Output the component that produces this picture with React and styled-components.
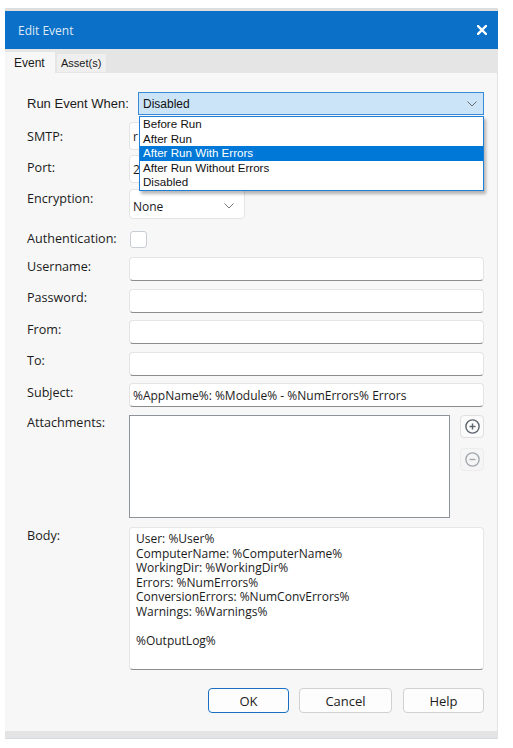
import React from "react";
import styled, { createGlobalStyle } from "styled-components";

const GlobalStyle = createGlobalStyle`
  body {
    margin: 0;
    background: #ffffff;
    font-family: "Open Sans", "Liberation Sans", sans-serif;
  }
`;

const Dialog = styled.div`
  width: 493px;
  margin: 8px 0 0 5px;
  border-top: 3px solid #dedede;
`;

const TitleBar = styled.div`
  height: 38px;
  background: #0b70c7;
  display: flex;
  align-items: center;
  justify-content: space-between;
  padding: 0 11px 0 13px;
`;

const Title = styled.div`
  font-family: "Open Sans", sans-serif;
  font-size: 12px;
  color: #dfe9f6;
`;

const TabStrip = styled.div`
  height: 24px;
  background: #e5e5e5;
  display: flex;
  align-items: flex-end;
  gap: 2px;
`;

const Tab = styled.div`
  height: ${(p) => (p.$active ? "21px" : "18px")};
  margin-bottom: ${(p) => (p.$active ? "0" : "1px")};
  padding: ${(p) => (p.$active ? "0 0 0 9px" : "0 0 0 4px")};
  background: ${(p) => (p.$active ? "#f7f7f7" : "#efefef")};
  font-family: "Liberation Sans", Arial, sans-serif;
  font-size: ${(p) => (p.$active ? "12px" : "11px")};
  color: #1a1a1a;
  display: flex;
  align-items: center;
  width: ${(p) => (p.$active ? "50px" : "49px")};
  box-sizing: border-box;
`;

const Body = styled.div`
  background: #f7f7f7;
  border-right: 1px solid #e2e2e2;
  padding: 19px 13px 18px 22px;
  display: flex;
  flex-direction: column;
`;

const Row = styled.div`
  display: grid;
  grid-template-columns: 102px 1fr;
  align-items: ${(p) => p.$align || "start"};
  margin-top: ${(p) => p.$top || 0}px;
`;

const Label = styled.div`
  font-family: ${(p) =>
    p.$classic ? '"Liberation Sans", Arial, sans-serif' : '"Open Sans", sans-serif'};
  font-size: ${(p) => (p.$classic ? "13px" : "12.6px")};
  line-height: 16px;
  color: #1b1b1b;
  white-space: nowrap;
  margin-top: ${(p) => p.$offset || 0}px;
`;

const ComboWrap = styled.div`
  position: relative;
  margin-left: 9px;
`;

const Combo = styled.div`
  height: 23px;
  box-sizing: border-box;
  background: #cce4f7;
  border: 1px solid #3b8ad6;
  display: flex;
  align-items: center;
  justify-content: space-between;
  padding: 0 6px 0 4px;
  font-family: "Liberation Sans", Arial, sans-serif;
  font-size: 12px;
  color: #111;
`;

const DropList = styled.div`
  position: absolute;
  top: 24px;
  left: 1px;
  right: 0;
  z-index: 5;
  background: #ffffff;
  border: 1px solid #1e7fd8;
  box-shadow: 2px 3px 3px rgba(0, 0, 0, 0.28);
`;

const DropItem = styled.div`
  height: 14.6px;
  line-height: 14.6px;
  padding-left: 3px;
  font-family: "Liberation Sans", Arial, sans-serif;
  font-size: 11.6px;
  color: ${(p) => (p.$selected ? "#ffffff" : "#111")};
  background: ${(p) => (p.$selected ? "#0078d7" : "transparent")};
  white-space: nowrap;
`;

const TextBox = styled.div`
  height: ${(p) => p.$height || 24}px;
  box-sizing: border-box;
  background: #ffffff;
  border: 1px solid #e4e4e4;
  border-bottom-color: ${(p) => (p.$flat ? "#e4e4e4" : "#8c8c8c")};
  border-radius: 4px;
  padding: 0 3px;
  display: flex;
  align-items: center;
  font-size: 12px;
  color: #1b1b1b;
  white-space: nowrap;
  overflow: hidden;
`;

const Select = styled(TextBox)`
  width: 116px;
  height: 30px;
  justify-content: space-between;
  padding: 4px 10px 0 3px;
  border-bottom-color: #e4e4e4;
`;

const CheckBox = styled.div`
  width: 17px;
  height: 17px;
  box-sizing: border-box;
  margin-left: 1px;
  border: 1px solid #c9ced6;
  border-radius: 3px;
  background: #ffffff;
`;

const AttachArea = styled.div`
  display: flex;
  gap: 10px;
`;

const ListBox = styled.div`
  width: 321px;
  height: 103px;
  box-sizing: border-box;
  background: #ffffff;
  border: 1px solid #8e939a;
`;

const SideButtons = styled.div`
  display: flex;
  flex-direction: column;
  gap: 10px;
`;

const IconButton = styled.div`
  width: 24px;
  height: 23px;
  box-sizing: border-box;
  border: 1px solid ${(p) => (p.$disabled ? "#ececec" : "#e0e0e0")};
  border-radius: 4px;
  background: ${(p) => (p.$disabled ? "#f5f5f5" : "#fbfbfb")};
  display: flex;
  align-items: center;
  justify-content: center;
`;

const BodyText = styled.div`
  height: 143px;
  box-sizing: border-box;
  background: #ffffff;
  border: 1px solid #e6e6e6;
  border-bottom-color: #8c8c8c;
  border-radius: 4px;
  padding: 4px 6px;
  font-size: 12px;
  line-height: 14.5px;
  color: #1b1b1b;
  white-space: pre;
`;

const ButtonRow = styled.div`
  display: flex;
  justify-content: flex-end;
  margin-top: 18px;
`;

const Button = styled.div`
  width: ${(p) => p.$width}px;
  height: 25px;
  margin-left: ${(p) => p.$gap || 0}px;
  box-sizing: border-box;
  border: 1px solid ${(p) => (p.$primary ? "#1a6fc0" : "#d1d1d1")};
  border-radius: 4px;
  background: #fdfdfd;
  display: flex;
  align-items: center;
  justify-content: center;
  font-size: 13px;
  color: #1b1b1b;
`;

const BottomStrip = styled.div`
  height: 7px;
  background: #e4e4e4;
  border-bottom: 1px solid #d6dbe2;
`;

const Chevron = ({ color = "#6b6b6b" }) => (
  <svg width="10" height="6" viewBox="0 0 10 6">
    <path d="M0.5 0.5 L5 5 L9.5 0.5" fill="none" stroke={color} strokeWidth="1" />
  </svg>
);

const CloseIcon = () => (
  <svg width="10" height="10" viewBox="0 0 10 10">
    <path d="M1 1 L9 9 M9 1 L1 9" stroke="#ffffff" strokeWidth="2.4" strokeLinecap="square" />
  </svg>
);

const CircleIcon = ({ plus, color }) => (
  <svg width="15" height="15" viewBox="0 0 15 15">
    <circle cx="7.5" cy="7.5" r="6.6" fill="none" stroke={color} strokeWidth="1.4" />
    <path d="M4.5 7.5 H10.5" stroke={color} strokeWidth="1.4" />
    {plus && <path d="M7.5 4.5 V10.5" stroke={color} strokeWidth="1.4" />}
  </svg>
);

const runOptions = [
  "Before Run",
  "After Run",
  "After Run With Errors",
  "After Run Without Errors",
  "Disabled",
];

const bodyLines = `User: %User%
ComputerName: %ComputerName%
WorkingDir: %WorkingDir%
Errors: %NumErrors%
ConversionErrors: %NumConvErrors%
Warnings: %Warnings%

%OutputLog%`;

export default function App() {
  return (
    <>
      <GlobalStyle />
      <Dialog>
        <TitleBar>
          <Title>Edit Event</Title>
          <CloseIcon />
        </TitleBar>
        <TabStrip>
          <Tab $active>Event</Tab>
          <Tab>Asset(s)</Tab>
        </TabStrip>
        <Body>
          <Row $align="center">
            <Label $classic>Run Event When:</Label>
            <ComboWrap>
              <Combo>
                <span>Disabled</span>
                <Chevron />
              </Combo>
              <DropList>
                {runOptions.map((o) => (
                  <DropItem key={o} $selected={o === "After Run With Errors"}>
                    {o}
                  </DropItem>
                ))}
              </DropList>
            </ComboWrap>
          </Row>
          <Row $top={7}>
            <Label $offset={7}>SMTP:</Label>
            <TextBox $height={28} $flat>r</TextBox>
          </Row>
          <Row $top={5}>
            <Label $offset={5}>Port:</Label>
            <TextBox $height={28} $flat>2</TextBox>
          </Row>
          <Row $top={6}>
            <Label $offset={2}>Encryption:</Label>
            <Select>
              <span>None</span>
              <Chevron color="#7a7a7a" />
            </Select>
          </Row>
          <Row $top={12}>
            <Label $offset={0}>Authentication:</Label>
            <CheckBox />
          </Row>
          <Row $top={9}>
            <Label $offset={1.5}>Username:</Label>
            <TextBox />
          </Row>
          <Row $top={7.5}>
            <Label $offset={1.5}>Password:</Label>
            <TextBox />
          </Row>
          <Row $top={7.5}>
            <Label $offset={1.5}>From:</Label>
            <TextBox />
          </Row>
          <Row $top={7.5}>
            <Label $offset={1.5}>To:</Label>
            <TextBox />
          </Row>
          <Row $top={7.5}>
            <Label $offset={2}>Subject:</Label>
            <TextBox>%AppName%: %Module% - %NumErrors% Errors</TextBox>
          </Row>
          <Row $top={8}>
            <Label $offset={0}>Attachments:</Label>
            <AttachArea>
              <ListBox />
              <SideButtons>
                <IconButton>
                  <CircleIcon plus color="#5c646e" />
                </IconButton>
                <IconButton $disabled>
                  <CircleIcon color="#a3a8ae" />
                </IconButton>
              </SideButtons>
            </AttachArea>
          </Row>
          <Row $top={9}>
            <Label $offset={1}>Body:</Label>
            <BodyText>{bodyLines}</BodyText>
          </Row>
          <ButtonRow>
            <Button $width={81} $primary>OK</Button>
            <Button $width={93} $gap={10}>Cancel</Button>
            <Button $width={81} $gap={11}>Help</Button>
          </ButtonRow>
        </Body>
        <BottomStrip />
      </Dialog>
    </>
  );
}
